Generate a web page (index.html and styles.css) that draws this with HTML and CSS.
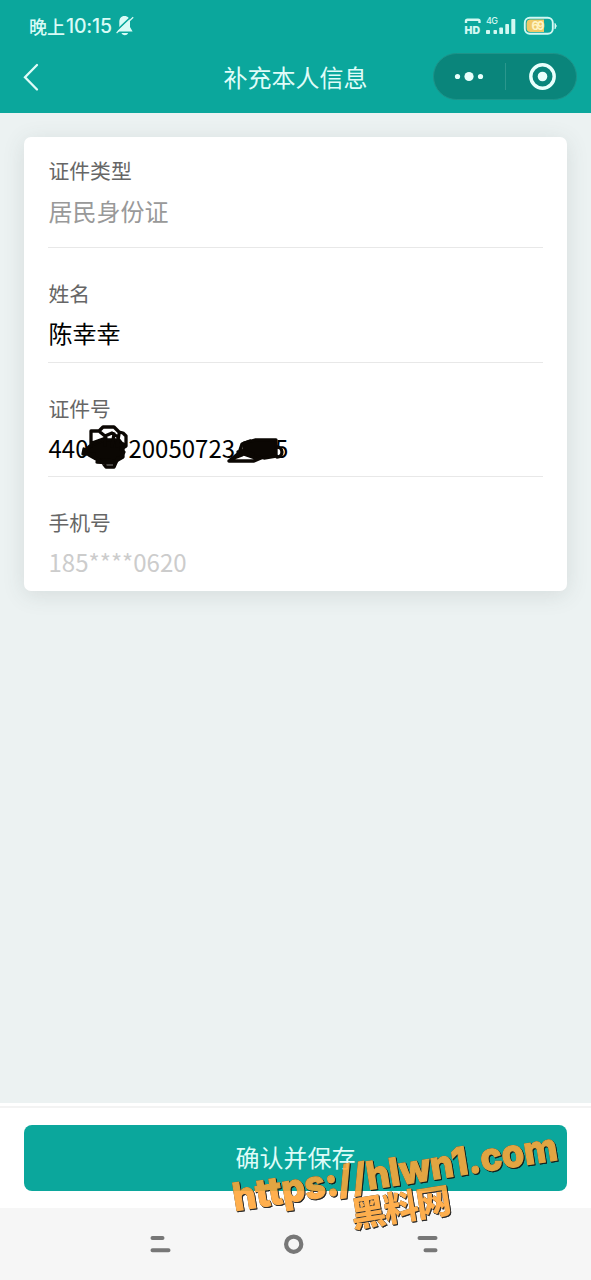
FILE: index.html
```
<!DOCTYPE html>
<html lang="zh-CN">
<head>
<meta charset="utf-8">
<title>补充本人信息</title>
<link rel="stylesheet" href="styles.css">
</head>
<body>
<div class="screen">
  <header class="header">
    <div class="status">
      <span class="time">晚上<span class="clock">10:15</span></span>
      <svg class="bell" width="18" height="20" viewBox="0 0 18 20">
        <path d="M8.500 0C5 0 3.300 2.600 3.300 6v5L1 15.600h15.600L14 11V6C14 2.600 12 0 8.500 0Z" fill="#d9fbf6"/>
        <path d="M5.500 17h6.600c-.6 1.500-1.800 2.200-3.300 2.200S6 18.400 5.500 17Z" fill="#d9fbf6"/>
        <path d="M-1 16 16.500-.5" stroke="#0ba79c" stroke-width="1.600"/>
        <path d="M.6 17 17.200 1.200" stroke="#d9fbf6" stroke-width="1.200"/>
      </svg>
      <svg class="signals" width="94" height="24" viewBox="0 0 94 24">
        <path d="M2 9V7.200Q2 5.800 3.500 5.800H14Q15.500 5.800 15.500 7.200V9" fill="none" stroke="#d3f8f2" stroke-width="2.400"/>
        <text class="hd" x="0.500" y="19.800" textLength="15.500">HD</text>
        <text class="net" x="22" y="9.500" textLength="12">4G</text>
        <g fill="#d3f8f2">
          <rect x="22" y="16" width="4" height="4" rx=".8"/>
          <rect x="29.500" y="16" width="3.500" height="4" rx=".8"/>
          <rect x="35.300" y="13.500" width="3.700" height="6.500" rx=".8"/>
          <rect x="41.300" y="10" width="3.700" height="10" rx=".8"/>
          <rect x="47.300" y="5" width="4" height="15" rx=".8"/>
          <path d="M91 9.500q2.500 2.300 0 5.200Z" stroke="#d3f8f2"/>
        </g>
        <rect x="60.800" y="3.700" width="28" height="16" rx="5" fill="none" stroke="#d3f8f2" stroke-width="1.900"/>
        <path d="M66.500 5.500H80V18H66.500Q62.600 18 62.600 14V9.500Q62.600 5.500 66.500 5.500Z" fill="#f0c968"/>
        <text class="pct" x="67.500" y="15.700" textLength="13">69</text>
      </svg>
    </div>
    <div class="nav">
      <svg class="back" width="18" height="30" viewBox="0 0 18 30"><path d="M15 3 3 15.200 15 27.500" fill="none" stroke="#dffcf8" stroke-width="2.300" stroke-linecap="round"/></svg>
      <h1 class="title">补充本人信息</h1>
      <svg class="capsule" width="144" height="47" viewBox="0 0 144 47">
        <rect x=".5" y=".5" width="143" height="46" rx="23" fill="#0a857b" stroke="#1e9389"/>
        <path d="M72.500 10v27" stroke="#2b978d"/>
        <g fill="#e9fffc"><circle cx="24.500" cy="23.500" r="2.600"/><circle cx="36" cy="23.500" r="4.600"/><circle cx="47.500" cy="23.500" r="2.600"/><circle cx="109.500" cy="23.500" r="4.800"/></g>
        <circle cx="109.500" cy="23.500" r="11.700" fill="none" stroke="#e9fffc" stroke-width="3.400"/>
      </svg>
    </div>
  </header>
  <main class="content">
    <section class="card">
      <div class="field first"><span class="label">证件类型</span><span class="value muted">居民身份证</span></div>
      <div class="field"><span class="label">姓名</span><span class="value">陈幸幸</span></div>
      <div class="field"><span class="label">证件号</span>
        <span class="value idnum"><span>440</span><span class="masked"></span><span>20050723</span><span class="masked"></span><span>5</span>
          <svg class="scribble" width="260" height="50" viewBox="0 0 260 50">
            <g fill="none" stroke="#0b0703" stroke-width="3.300" stroke-linejoin="round" stroke-linecap="round">
              <path fill="#0b0703" d="M46 20 56 16 71 16 75 21 75 33 68 37 50 36 41 31 39 25Z"/>
              <path d="M43 22V7h8l4-4h11l5 5 4 1 3 3v10l-5 3M52 8l5 4 7-3 6 4M57 12v9M66 10l-2 12M71 10l-2 12 6-2M44 19l14-5M36 25l-1 5h11M36 28l7-7M43 31l11 7 4 5h8l4-9M49 38l17 1M72 34l4-6"/>
              <path fill="#0b0703" d="M196 19 207 16H228V32L216 34 196 30Z"/>
              <path d="M181 37 191 29 194 20 202 17M181 37H206L213 34M190 28l17 6M192 26l13 4M186 34l8-3M229 23a5 5 0 1 1 0 10"/>
            </g>
          </svg>
        </span>
      </div>
      <div class="field last"><span class="label">手机号</span><span class="value pale">185****0620</span></div>
    </section>
  </main>
  <footer class="actions"><button class="save">确认并保存</button></footer>
  <nav class="system">
    <svg width="591" height="72" viewBox="0 0 591 72" fill="none" stroke="#777" stroke-linecap="round" stroke-width="4">
      <path d="M152.500 30h10M152.500 42.200h16M419.500 30h16M425.500 42.200h10"/>
      <circle cx="293.700" cy="36.200" r="7.600" stroke-width="4.200"/>
    </svg>
  </nav>
  <svg class="watermark" width="351" height="150" viewBox="0 0 351 150">
    <g transform="translate(7 101) rotate(-9)">
      <text class="url" textLength="328" lengthAdjust="spacingAndGlyphs">https://hlwn1.com</text>
      <text class="site" x="114" y="35" textLength="101">黑料网</text>
    </g>
  </svg>
</div>
</body>
</html>
```
FILE: styles.css
```
* { box-sizing: border-box; }
body { margin: 0; font-family: "Noto Sans CJK SC", sans-serif; }
.screen { position: relative; width: 591px; height: 1280px; display: flex; flex-direction: column; overflow: hidden; background: #ecf2f2; }
.header { height: 113px; background: #0ba79c; flex: none; }
.status { height: 53px; display: flex; align-items: flex-start; padding: 12px 33px 0 29px; color: #d9fbf6; }
.time { display: flex; flex: none; font-size: 18px; line-height: 28px; font-weight: 500; }
.clock { font: 500 19.500px/29px Inter, sans-serif; width: 50px; padding-left: 1px; letter-spacing: -0.200px; }
.bell { margin: 4px 0 0 1px; flex: none; }
.signals { margin-left: auto; margin-top: 2px; }
.hd { font: 900 10.500px Inter, sans-serif; fill: #d3f8f2; }
.net { font: 500 9px Inter, sans-serif; fill: #d3f8f2; }
.pct { font: 700 11.500px Inter, sans-serif; fill: #fff4c4; }
.nav { height: 47px; display: grid; grid-template-columns: 144px 1fr 144px; align-items: center; padding: 0 14px; }
.back { margin-left: 8px; }
.title { margin: 0; font-size: 24px; line-height: 36px; font-weight: 400; color: #dffcf8; text-align: center; padding-top: 1px; }
.content { height: 990px; padding: 24px; flex: none; }
.card { height: 454px; padding: 0 24px; background: #fff; border-radius: 7px; box-shadow: 0 4px 22px rgba(60,80,80,.13); }
.field { height: 114.500px; padding-top: 29px; display: flex; flex-direction: column; border-bottom: 1px solid #e8e8e8; }
.first { height: 111px; padding-top: 17px; }
.last { border: 0; height: 114px; }
.label { font-size: 20.800px; line-height: 32px; color: #666; padding-left: .5px; }
.value { font-size: 24px; line-height: 36px; margin-top: 6px; color: #000; padding-left: .5px; }
.first .value { margin-top: 7px; }
.value.muted { color: #999; }
.value.pale { color: #ccc; }
.idnum { position: relative; display: flex; }
.masked { width: 40px; }
.scribble { position: absolute; left: 0; top: -6px; }
.actions { height: 105px; flex: none; padding: 22px 24px 0; background: linear-gradient(#fff 3px, #f3f3f3 3px, #f3f3f3 5px, #fff 5px); }
.save { display: block; width: 543px; height: 66px; border: 0; border-radius: 8px; padding: 0 0 4px; background: #0ba79c; color: #dffcf8; font: 400 24px "Noto Sans CJK SC", sans-serif; }
.system { height: 72px; background: #f6f6f6; }
.watermark { position: absolute; left: 228px; top: 1110px; opacity: .88; overflow: visible; filter: drop-shadow(0 0 .5px #222) drop-shadow(1.500px 1.500px 0 #111); }
.url { font: 800 38.500px Inter, sans-serif; fill: #ffa536; stroke: #ffa536; stroke-width: 1.200px; }
.site { font: 900 35px "Noto Sans CJK SC", sans-serif; fill: #ffa536; }
```
